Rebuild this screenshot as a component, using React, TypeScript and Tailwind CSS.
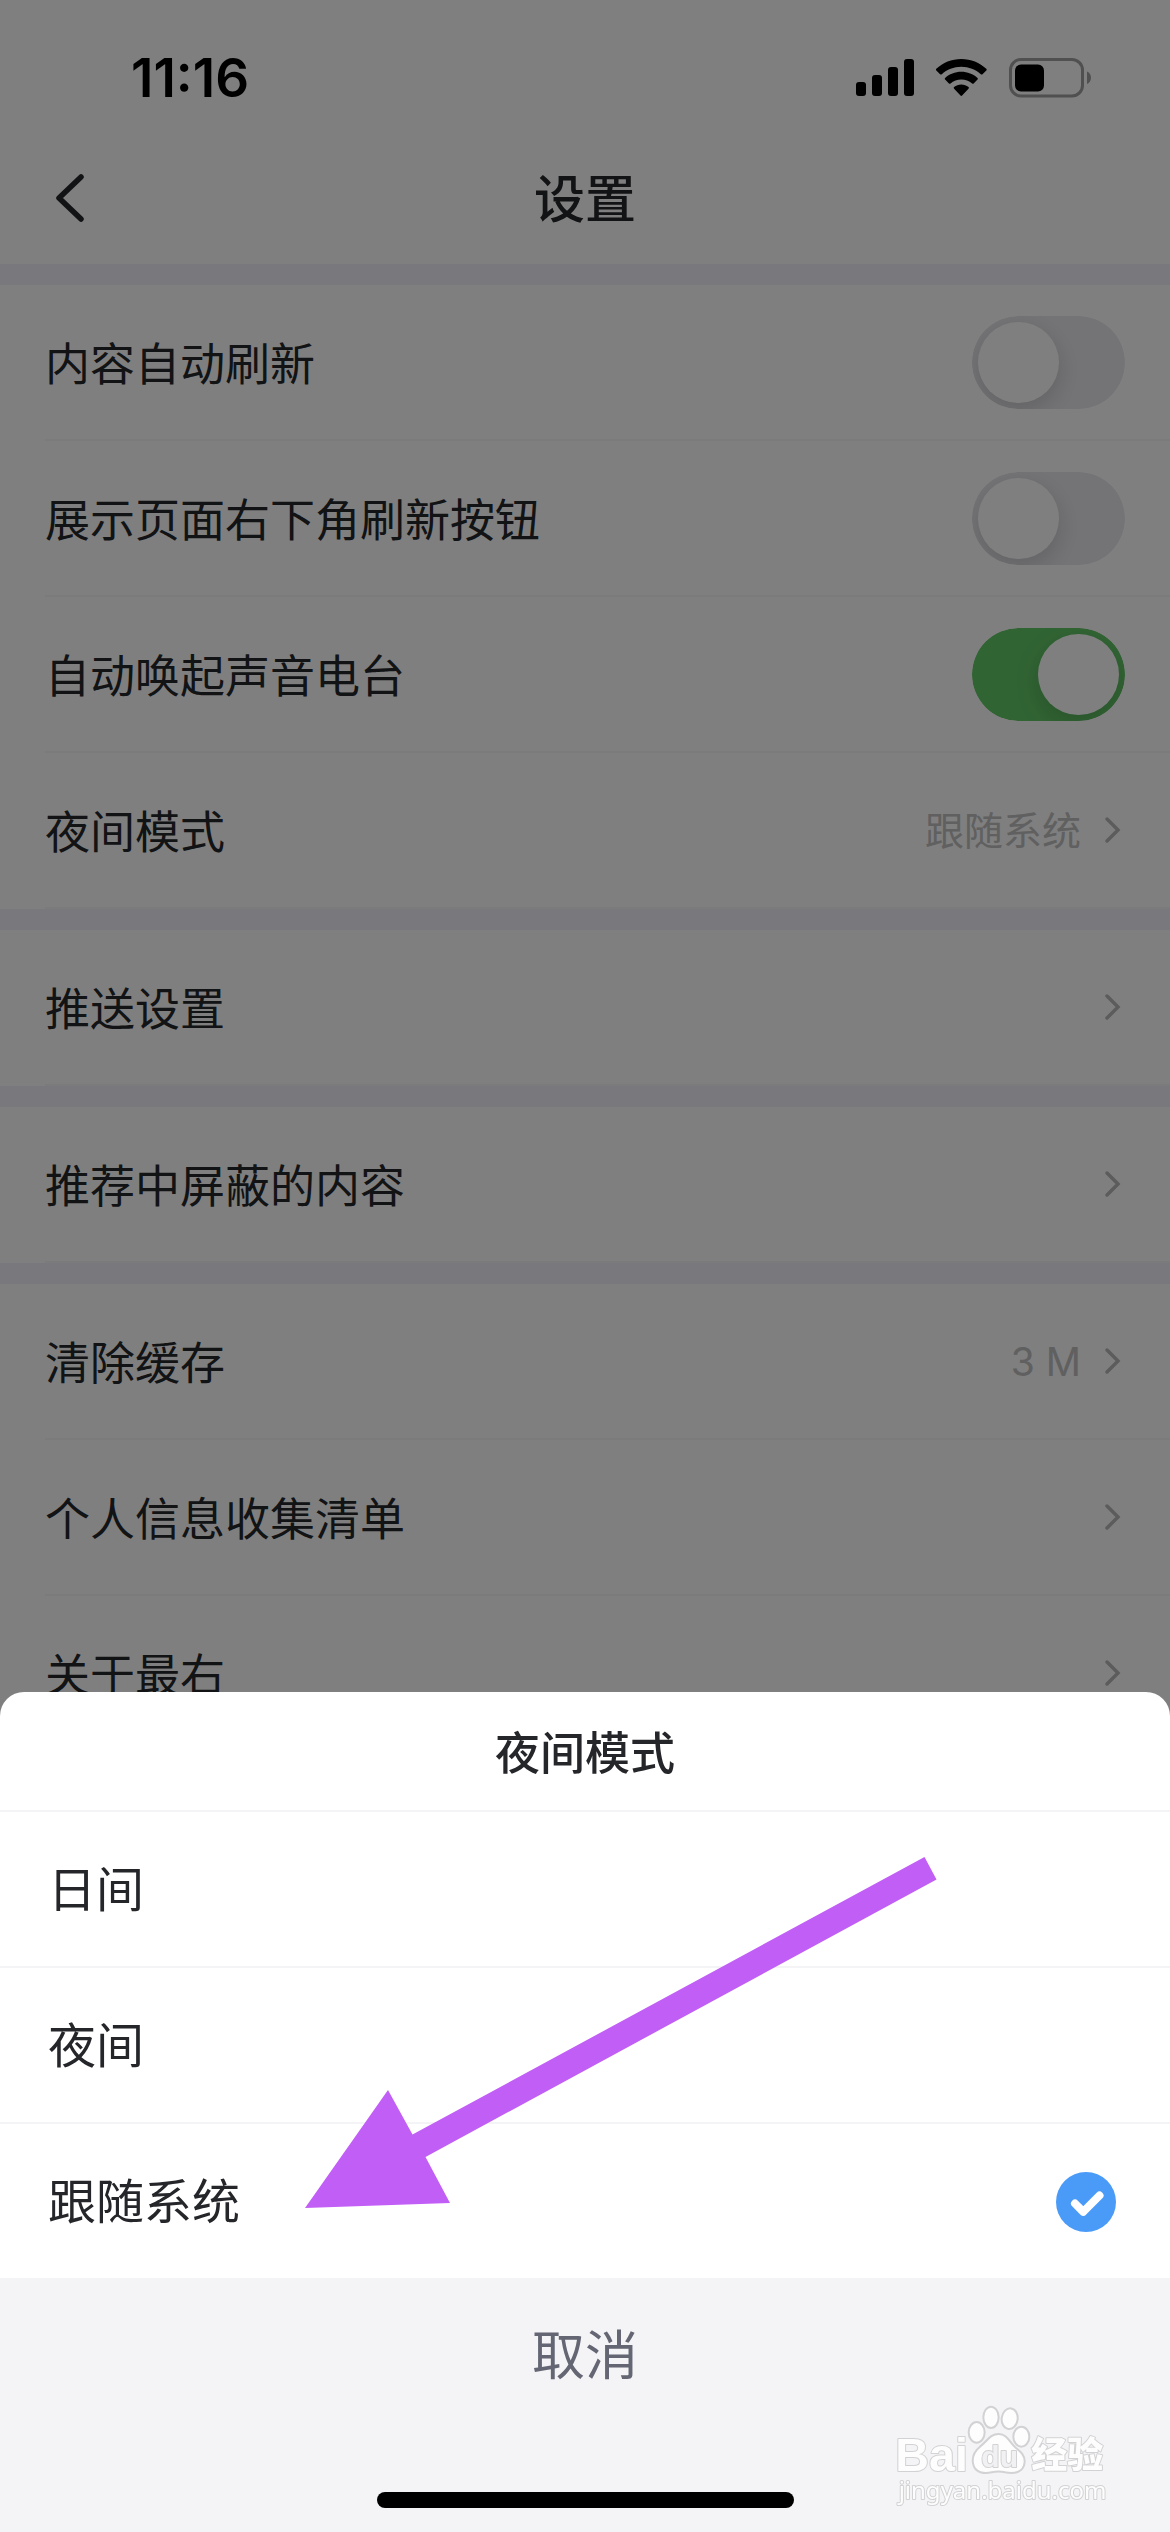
import { useState } from 'react';

type Row = {
  label: string;
  value?: string;
  toggle?: boolean;
  on?: boolean;
};

const sections: Row[][] = [
  [
    { label: '内容自动刷新', toggle: true, on: false },
    { label: '展示页面右下角刷新按钮', toggle: true, on: false },
    { label: '自动唤起声音电台', toggle: true, on: true },
    { label: '夜间模式', value: '跟随系统' },
  ],
  [{ label: '推送设置' }],
  [{ label: '推荐中屏蔽的内容' }],
  [{ label: '清除缓存', value: '3 M' }, { label: '个人信息收集清单' }, { label: '关于最右' }],
];

const modes = ['日间', '夜间', '跟随系统'];

function StatusBar() {
  return (
    <div className="flex h-33 items-center justify-between pt-6 pr-[78px] pl-[131px] text-black">
      <span className="text-[53px] leading-none font-semibold">11:16</span>
      <div className="flex items-center gap-[22px]">
        <svg width="58" height="38" viewBox="0 0 58 38" fill="currentColor">
          <rect x="0" y="23" width="10" height="14" rx="3" />
          <rect x="16" y="16" width="10" height="21" rx="3" />
          <rect x="32" y="8" width="10" height="29" rx="3" />
          <rect x="48" y="0" width="10" height="37" rx="3" />
        </svg>
        <svg width="51" height="38" viewBox="0 0 51 38" fill="currentColor">
          <path d="M25.3 0C35 0 43.8 3.7 50.3 9.8c.5.5.5 1.2 0 1.7L46.500 15.200c-.5.5-1.200.5-1.700 0C39.700 10.500 32.800 7.700 25.300 7.700S10.900 10.500 5.800 15.200c-.5.5-1.200.5-1.700 0L.3 11.500c-.5-.5-.5-1.200 0-1.700C6.800 3.700 15.600 0 25.300 0z" />
          <path d="M25.300 12.700c6.200 0 11.900 2.300 16.200 6.200.5.5.5 1.200 0 1.700l-3.800 3.900c-.5.4-1.100.5-1.600 0-2.900-2.600-6.700-4.100-10.800-4.100s-7.900 1.500-10.800 4.100c-.5.5-1.100.4-1.600 0l-3.800-3.900c-.5-.5-.5-1.200 0-1.700 4.300-3.900 10-6.200 16.200-6.200z" />
          <path d="M25.300 25.500c2.700 0 5.200 1 7.200 2.600.5.4.5 1.200 0 1.700l-6.400 6.700c-.4.5-1.200.5-1.600 0l-6.400-6.700c-.5-.5-.5-1.300 0-1.700 2-1.600 4.500-2.600 7.200-2.600z" />
        </svg>
        <svg width="83" height="40" viewBox="0 0 83 40">
          <rect x="1.500" y="1.500" width="72" height="36.500" rx="10.500" fill="none" stroke="#a0a0a0" strokeWidth="3" />
          <rect x="6" y="6.500" width="29" height="27" rx="6" fill="#000" />
          <path d="M78 13.500c2.600 1 4 3.400 4 6.300s-1.400 5.300-4 6.300z" fill="#a0a0a0" />
        </svg>
      </div>
    </div>
  );
}

function Chevron() {
  return (
    <svg width="24" height="30" viewBox="0 0 24 30" fill="none" className="shrink-0">
      <path d="M6 4l11 11L6 26" stroke="#b8b8b8" strokeWidth="3.500" strokeLinecap="round" />
    </svg>
  );
}

function Toggle({ label, defaultChecked }: { label: string; defaultChecked?: boolean }) {
  return (
    <span className="relative h-[93px] w-[153px] shrink-0 overflow-hidden rounded-full">
      <input
        type="checkbox"
        aria-label={label}
        defaultChecked={defaultChecked}
        className="peer absolute inset-0 h-full w-full appearance-none rounded-full bg-[#e9e9ee] checked:bg-[#62c867]"
      />
      <span className="pointer-events-none absolute top-1.5 left-1.5 size-[81px] rounded-full bg-white shadow-[0_8px_24px_rgba(0,0,0,0.16)] peer-checked:left-[66px]" />
    </span>
  );
}

function SettingRow({ row }: { row: Row }) {
  const rowClass =
    'flex h-39 w-full items-center justify-between border-b-2 border-[#f7f7f8] pr-[45px] text-left text-[45px] leading-none text-[#25262a]';

  if (row.toggle) {
    return (
      <label className={rowClass}>
        <span className="pt-1">{row.label}</span>
        <Toggle label={row.label} defaultChecked={row.on} />
      </label>
    );
  }

  return (
    <button className={rowClass}>
      <span className="pt-1">{row.label}</span>
      <span className="flex items-center gap-5">
        {row.value && <span className="text-[39px] text-[#c0c0c0]">{row.value}</span>}
        <Chevron />
      </span>
    </button>
  );
}

function Watermark() {
  return (
    <svg
      viewBox="0 0 810 450"
      className="pointer-events-none absolute right-[30px] bottom-0.5 w-[270px]"
      fill="#fdfdfd"
      stroke="#d2d2d4"
      strokeWidth="6"
      strokeLinejoin="round"
    >
      <ellipse cx="320" cy="157" rx="24" ry="31" />
      <ellipse cx="363" cy="112" rx="23" ry="32" />
      <ellipse cx="419" cy="116" rx="24" ry="31" transform="rotate(8 419 116)" />
      <ellipse cx="454" cy="170" rx="24" ry="30" />
      <path d="M386 162C360 162 351 184 330 200C310 216 306 232 309 250C314 280 345 282 365 277C380 274 392 274 405 277C430 282 461 280 464 246C465 226 452 215 438 204C419 189 413 162 386 162Z" />
      <g style={{ paintOrder: 'stroke' }}>
        <text x="76" y="273" fontSize="140" fontWeight="700" fontFamily="Liberation Sans, sans-serif">
          Bai
        </text>
        <text x="334" y="261" fontSize="90" fontWeight="700" fill="#f1f1f3" fontFamily="Liberation Sans, sans-serif">
          du
        </text>
        <text x="484" y="265" fontSize="108" fontWeight="900" fontFamily="Noto Sans CJK SC, sans-serif">
          经验
        </text>
        <text x="86" y="356" fontSize="72" fontFamily="Noto Sans, sans-serif">
          jingyan.baidu.com
        </text>
      </g>
    </svg>
  );
}

function ModeSheet() {
  const [mode, setMode] = useState('跟随系统');

  return (
    <div role="dialog" aria-label="夜间模式" className="relative w-full overflow-hidden rounded-t-3xl bg-white">
      <h2 className="flex h-30 items-center justify-center border-b-2 border-[#f4f4f7] pt-1 text-[45px] leading-none font-medium text-[#25262a]">
        夜间模式
      </h2>
      <div>
        {modes.map((m) => (
          <label
            key={m}
            className="flex h-39 items-center justify-between border-b-2 border-[#f4f4f7] pt-0.5 pr-[54px] pl-12 text-[48px] leading-none text-[#25262a]"
          >
            <input
              type="radio"
              name="mode"
              checked={mode === m}
              onChange={() => setMode(m)}
              className="sr-only"
            />
            <span>{m}</span>
            {mode === m && (
              <svg width="60" height="60" viewBox="0 0 60 60" fill="none">
                <circle cx="30" cy="30" r="30" fill="#4a9bf8" />
                <path d="M19 31.500l8.300 8.300 16.200-16.300" stroke="#fff" strokeWidth="8" strokeLinecap="round" strokeLinejoin="round" />
              </svg>
            )}
          </label>
        ))}
      </div>

      {/* Cancel */}
      <div className="flex flex-col items-center justify-between bg-[#f4f4f7] pb-6">
        <button className="h-38 w-full text-[53px] leading-none text-[#646673]">取消</button>
        <div className="mt-15 h-4 w-[417px] rounded-full bg-black" />
      </div>

      {/* Pointer to the selected mode */}
      <svg
        width="632"
        height="351"
        viewBox="0 0 632 351"
        fill="#c15ef6"
        className="pointer-events-none absolute top-[165px] left-[305px]"
      >
        <path d="M0 351L83 233L107.500 277.500L619.500 0L631.500 22.500L120.500 300L145 346Z" />
      </svg>
      <Watermark />
    </div>
  );
}

export default function App() {
  return (
    <div
      className="min-h-screen bg-white"
      style={{ fontFamily: "Inter, 'Noto Sans CJK SC', sans-serif" }}
    >
      <StatusBar />

      {/* Header */}
      <header className="grid h-33 grid-cols-3 items-center px-12">
        <button aria-label="返回" className="justify-self-start">
          <svg width="42" height="54" viewBox="0 0 42 54" fill="none">
            <path d="M33 6L11 27l22 21" stroke="#25262a" strokeWidth="5.500" strokeLinecap="round" strokeLinejoin="round" />
          </svg>
        </button>
        <h1 className="pt-0.5 text-center text-[51px] leading-none font-medium text-[#25262a]">设置</h1>
      </header>

      {/* Settings */}
      <main className="flex flex-col gap-[21px] bg-[#f2f1fa] pt-[21px]">
        {sections.map((rows, i) => (
          <section key={i} className="bg-white pl-[45px]">
            {rows.map((row) => (
              <SettingRow key={row.label} row={row} />
            ))}
          </section>
        ))}
      </main>

      <div className="fixed inset-0 flex items-end bg-black/50">
        <ModeSheet />
      </div>
    </div>
  );
}
